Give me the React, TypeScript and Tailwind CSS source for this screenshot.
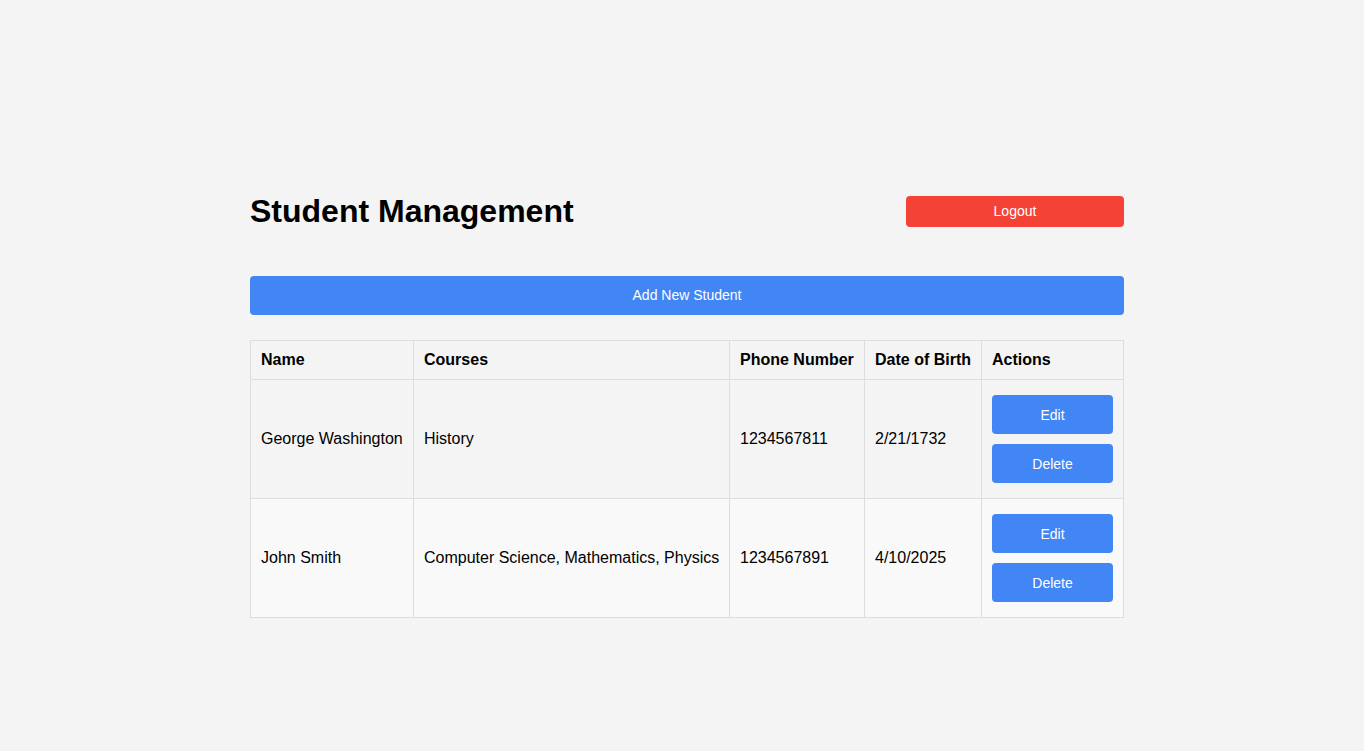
export default function App() {
  const rows = [
    { name: "George Washington", courses: "History", phone: "1234567811", dob: "2/21/1732", bg: "bg-[#f4f4f4]" },
    { name: "John Smith", courses: "Computer Science, Mathematics, Physics", phone: "1234567891", dob: "4/10/2025", bg: "bg-[#f9f9f9]" },
  ];
  return (
    <div className="min-h-[751px] bg-[#f4f4f4] pl-[250px] pr-[240px] pt-[193px] text-black" style={{ fontFamily: '"Liberation Sans", Arial, sans-serif' }}>
      <div className="flex items-center justify-between">
        <h1 className="text-[32px] font-bold leading-[37px]">Student Management</h1>
        <button className="h-[31px] w-[218px] rounded-[4px] bg-[#f44336] text-[14px] text-white">Logout</button>
      </div>
      <button className="mt-[46px] h-[39px] w-full rounded-[4px] bg-[#4285f4] text-[14px] text-white">Add New Student</button>
      <table className="mt-[25px] w-[calc(100%-1px)] table-fixed border-collapse text-[16px] leading-[normal]">
        <thead>
          <tr className="bg-[#f4f4f4]">
            <th className="w-[163px] border border-[#dddddd] p-[10px] text-left font-bold">Name</th>
            <th className="w-[316px] border border-[#dddddd] p-[10px] text-left font-bold">Courses</th>
            <th className="w-[135px] border border-[#dddddd] p-[10px] text-left font-bold whitespace-nowrap">Phone Number</th>
            <th className="w-[117px] border border-[#dddddd] p-[10px] text-left font-bold whitespace-nowrap">Date of Birth</th>
            <th className="w-[142px] border border-[#dddddd] p-[10px] text-left font-bold">Actions</th>
          </tr>
        </thead>
        <tbody>
          {rows.map((r) => (
            <tr key={r.name} className={r.bg}>
              <td className="border border-[#dddddd] p-[10px] align-middle whitespace-nowrap">{r.name}</td>
              <td className="border border-[#dddddd] p-[10px] align-middle whitespace-nowrap">{r.courses}</td>
              <td className="border border-[#dddddd] p-[10px] align-middle">{r.phone}</td>
              <td className="border border-[#dddddd] p-[10px] align-middle">{r.dob}</td>
              <td className="border border-[#dddddd] p-[10px] align-middle">
                <div className="flex flex-col gap-[10px] py-[5px]">
                  <button className="h-[39px] w-full rounded-[4px] bg-[#4285f4] text-[14px] text-white">Edit</button>
                  <button className="h-[39px] w-full rounded-[4px] bg-[#4285f4] text-[14px] text-white">Delete</button>
                </div>
              </td>
            </tr>
          ))}
        </tbody>
      </table>
    </div>
  );
}
